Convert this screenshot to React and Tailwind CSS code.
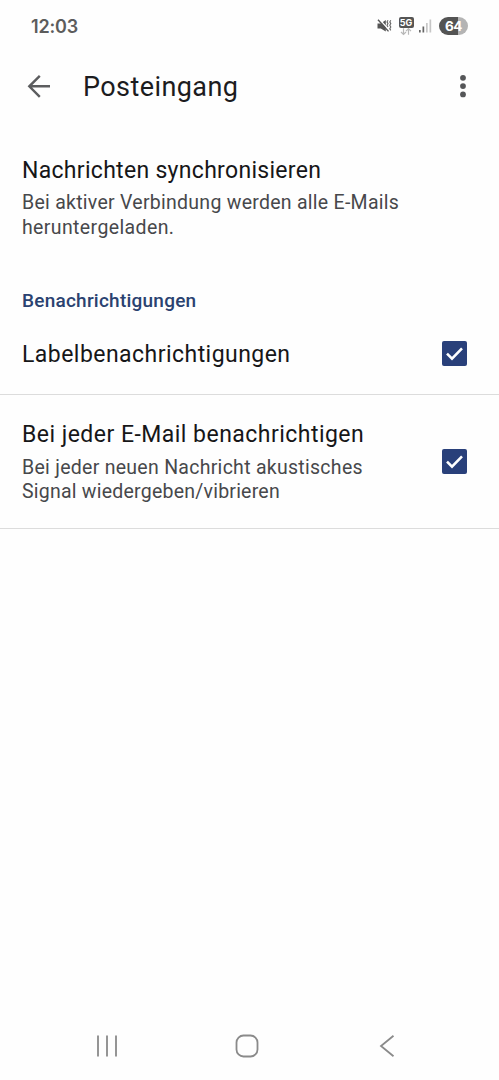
function StatusBar() {
  return (
    <header className="flex h-[50px] items-center justify-between pt-[2px] pr-[31px] pl-[31px] text-[#5c5c5c]">
      <time className="pt-px font-['Inter'] text-[18px] leading-6 font-semibold tracking-[-0.15px]">12:03</time>
      <div className="flex items-center">
        <svg width="15" height="16" viewBox="0 0 15 16" fill="none" className="mr-[6px]" aria-hidden="true">
          <path d="M0.5 5.5H3.8L8.8 2V13.5L3.8 10.5H0.5Z" fill="#555" />
          <path d="M2.3 1.2L11 10.8" stroke="#fefefe" strokeWidth="1.4" />
          <path d="M1 1.8L11.5 13.4" stroke="#555" strokeWidth="1.4" />
          <path d="M11 2.2l-1 1.7 1 1.7-1 1.7 1 1.7M13.8 2.2l-1 1.7 1 1.7-1 1.7 1 1.7-1 1.7 1 1.7" stroke="#666" strokeWidth="1.1" />
        </svg>
        <div className="mr-[5px] flex h-[19px] w-[16px] flex-col items-center">
          <span className="flex h-[11px] w-[15px] shrink-0 items-center justify-center rounded-[2px] bg-[#555] font-['Inter'] text-[9px] leading-none font-bold text-white">5G</span>
          <svg width="12" height="8" viewBox="0 0 12 8" fill="none" stroke="#b8b8b8" strokeWidth="1.2" aria-hidden="true">
            <path d="M3.5 0.3V6.3M1 4L3.5 6.5L6 4M8.5 6.7V0.9M6 3.1L8.5 0.6L11 3.1" />
          </svg>
        </div>
        <svg width="14" height="14" viewBox="0 0 14 14" className="mr-[6px]" aria-hidden="true">
          <path d="M0 11h1.7v2.5H0zM3.5 7.5h1.7v6H3.5z" fill="#666" />
          <path d="M7 4h1.7v9.5H7zM10.5 0.5h1.7v13h-1.7z" fill="#c6c6c6" />
        </svg>
        <span className="flex h-[18px] w-[29px] items-center justify-center rounded-full bg-linear-to-r from-[#545454] from-64% to-[#b4b4b4] to-64% pt-px font-['Inter'] text-[13.5px] leading-none font-bold tracking-[-0.5px] text-white">64</span>
      </div>
    </header>
  );
}

function AppBar() {
  return (
    <div className="flex h-[73px] items-center pr-[26px] pb-px pl-[27px]">
      <button aria-label="Zurück" className="flex">
        <svg width="24" height="24" viewBox="0 0 24 24" fill="none" stroke="#5c5d5f" strokeWidth="2.4" aria-hidden="true">
          <path d="M23 12.3H2.6M12.8 1.8L2.3 12.3L12.8 22.8" />
        </svg>
      </button>
      <h1 className="ml-[32px] flex-1 pt-[2px] text-[27px] leading-8 tracking-[0.42px] text-[#1c1c1e]">Posteingang</h1>
      <button aria-label="Weitere Optionen" className="flex w-5 justify-center">
        <svg width="8" height="24" viewBox="0 0 8 24" fill="#555658" aria-hidden="true">
          <circle cx="4" cy="3.8" r="2.9" />
          <circle cx="4" cy="12.1" r="2.9" />
          <circle cx="4" cy="20.4" r="2.9" />
        </svg>
      </button>
    </div>
  );
}

function Checkbox({ label }) {
  return (
    <button role="checkbox" aria-checked="true" aria-label={label} className="flex size-[25px] shrink-0 rounded-[2px] bg-[#29407a]">
      <svg width="25" height="25" viewBox="0 0 25 25" fill="none" stroke="#fff" strokeWidth="2.6" aria-hidden="true">
        <path d="M5 12.6L10 17.6L20 7.4" />
      </svg>
    </button>
  );
}

export default function App() {
  return (
    <div className="flex h-[1080px] w-[499px] flex-col overflow-hidden bg-[#fefefe] font-['Roboto',sans-serif]">
      <StatusBar />
      <AppBar />
      <main className="flex-1">
        <section className="h-[162px] px-[22px] pt-[33px]">
          <h2 className="text-[23px] leading-[30px] font-[450] whitespace-nowrap tracking-[0.3px] text-[#161618]">Nachrichten synchronisieren</h2>
          <p className="mt-[5px] text-[19.5px] leading-[24.5px] whitespace-nowrap tracking-[0.27px] text-[#47484b]">
            Bei aktiver Verbindung werden alle E-Mails<br /><span className="tracking-[0.38px]">heruntergeladen.</span>
          </p>
        </section>
        <h3 className="px-[22px] pt-[4px] text-[19px] leading-6 font-medium tracking-[0.24px] text-[#2a4270]">Benachrichtigungen</h3>
        <div className="flex h-[82px] items-center justify-between border-b border-[#dcdcdc] pr-[32px] pl-[22px]">
          <span className="pt-[3px] text-[23px] leading-[30px] font-[450] tracking-[0.46px] text-[#161618]">Labelbenachrichtigungen</span>
          <Checkbox label="Labelbenachrichtigungen" />
        </div>
        <div className="flex h-[134px] items-center justify-between border-b border-[#dcdcdc] pr-[32px] pl-[22px]">
          <div className="pt-px">
            <h2 className="text-[23px] leading-[30px] font-[450] whitespace-nowrap tracking-[0.47px] text-[#161618]">Bei jeder E-Mail benachrichtigen</h2>
            <p className="mt-[6px] text-[19.5px] leading-[24.5px] whitespace-nowrap tracking-[0.28px] text-[#47484b]">
              Bei jeder neuen Nachricht akustisches<br /><span className="tracking-[0.23px]">Signal wiedergeben/vibrieren</span>
            </p>
          </div>
          <Checkbox label="Bei jeder E-Mail benachrichtigen" />
        </div>
      </main>
      <nav className="flex h-[70px] items-center justify-between pt-[2px] pr-[104px] pl-[96px]">
        <button aria-label="Letzte Apps" className="flex">
          <svg width="22" height="24" viewBox="0 0 22 24" fill="none" stroke="#8a8a8a" strokeWidth="1.8" aria-hidden="true">
            <path d="M2 1.5V22.5M11 1.5V22.5M20 1.5V22.5" />
          </svg>
        </button>
        <button aria-label="Startseite" className="mr-[4px] flex">
          <svg width="24" height="24" viewBox="0 0 24 24" fill="none" stroke="#8a8a8a" strokeWidth="1.8" aria-hidden="true">
            <rect x="1.5" y="1.5" width="21" height="21" rx="7" />
          </svg>
        </button>
        <button aria-label="Zurück" className="flex">
          <svg width="16" height="24" viewBox="0 0 16 24" fill="none" stroke="#8a8a8a" strokeWidth="1.8" aria-hidden="true">
            <path d="M14.5 1.7L2 12L14.5 22.3" />
          </svg>
        </button>
      </nav>
    </div>
  );
}
